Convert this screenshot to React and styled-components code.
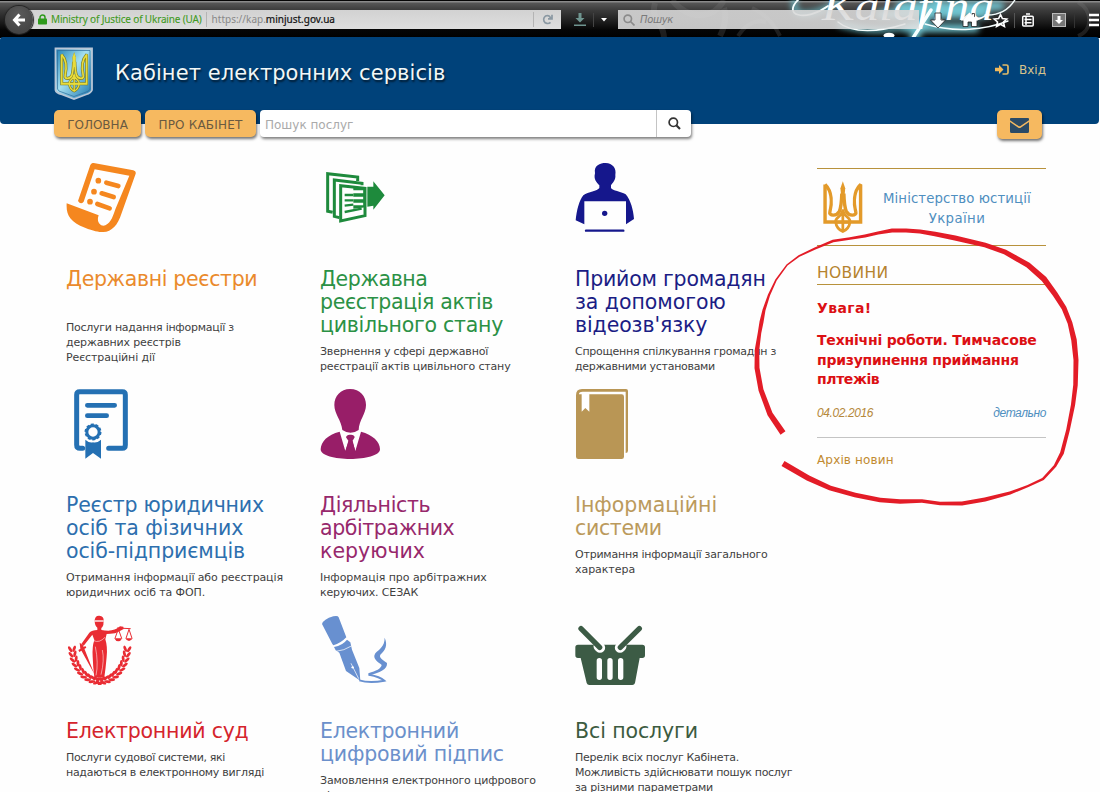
import React from 'react';
import styled, { createGlobalStyle } from 'styled-components';

const SANS = '"DejaVu Sans", Verdana, sans-serif';

const GlobalStyle = createGlobalStyle`
  * { box-sizing: border-box; }
  body { margin: 0; background: #fefefe; font-family: ${SANS}; color: #444; overflow: hidden; }
  svg { display: block; flex: none; }
`;

const Page = styled.div`
  position: relative;
  width: 1100px;
  height: 792px;
  overflow: hidden;
`;

/* ---------- browser toolbar ---------- */

const Toolbar = styled.div`
  position: relative;
  display: flex;
  align-items: center;
  height: 38px;
  padding: 3px 0 2px 5px;
  overflow: hidden;
  background: linear-gradient(#050505 0 1px, #8a8a8a 1px 2px, #565656 3px, #3c3c3c 10px, #1c1c1c 22px, #050505 30px, #000 38px);
`;

const ThemeArt = styled.svg`
  position: absolute;
  left: 640px;
  top: 0;
`;

const BackButton = styled.div`
  position: relative;
  z-index: 1;
  display: flex;
  align-items: center;
  justify-content: center;
  width: 28px;
  height: 28px;
  border-radius: 50%;
  background: radial-gradient(circle at 50% 30%, #5a5a5a, #3d3d3d);
  box-shadow: 0 0 1px 1px #222;
`;

const AddressBar = styled.div`
  position: relative;
  display: flex;
  align-items: center;
  width: 532px;
  height: 19px;
  margin-left: -4px;
  padding-left: 9px;
  background: linear-gradient(#d2d2d2, #dedede);
  font: 10px/19px "Noto Sans", sans-serif;
`;

const Owner = styled.span`
  margin-left: 4px;
  padding-right: 4px;
  color: #3f9a22;
  letter-spacing: -0.17px;
  white-space: nowrap;
  -webkit-text-stroke: 0.1px #3f9a22;
`;

const Rule = styled.span`
  width: 1px;
  height: ${p => p.$h}px;
  background: ${p => p.$c};
`;

const Url = styled.span`
  flex: 1;
  margin-left: 5px;
  color: #888;
  white-space: nowrap;
  b { font-weight: 400; color: #111; -webkit-text-stroke: 0.2px #111; }
`;

const Reload = styled.div`
  display: flex;
  align-items: center;
  justify-content: center;
  width: 28px;
  height: 15px;
  border-left: 1px solid #b4b4b4;
`;

const Downloads = styled.div`
  position: relative;
  display: flex;
  align-items: center;
  gap: 7px;
  width: 57px;
  padding-left: 13px;
`;

const BrowserSearch = styled.div`
  position: relative;
  display: flex;
  align-items: center;
  gap: 5px;
  width: 301px;
  height: 19px;
  padding-left: 5px;
  background: linear-gradient(rgba(215, 215, 215, 0.9), rgba(228, 228, 228, 0.86));
  color: #7a7a7a;
  font: italic 10px/19px "DejaVu Sans", sans-serif;
  letter-spacing: -0.35px;
`;

const Tools = styled.svg`
  position: relative;
`;

const script = '"Liberation Serif", serif';

function KalafinaArt() {
  return (
    <ThemeArt width="460" height="38" viewBox="640 0 460 38">
      <defs>
        <filter id="glow" x="-20%" y="-60%" width="140%" height="220%">
          <feGaussianBlur stdDeviation="3.2" />
        </filter>
      </defs>
      <g fill="none" stroke="#8d8d8d" strokeOpacity=".2" strokeWidth="6">
        <path d="M655 3C650 20 664 22 664 38M672 0C690 22 715 18 724 0M720 36Q728 20 724 8" />
        <path d="M738 36Q750 18 766 22M752 8Q770 16 780 36M1078 2C1092 10 1094 30 1078 36" strokeWidth="4" />
      </g>
      <g filter="url(#glow)" stroke="#6fc4d0" fill="none" strokeLinecap="round">
        <path strokeWidth="8" d="M900 6H1000M880 14H985M905 28H975" />
        <path strokeWidth="9" d="M936 2L914 38" />
        <path strokeWidth="5" d="M795 0C788 22 822 14 838 2M840 24Q880 36 915 24" />
      </g>
      <g fill="none" stroke="#f6ffff" strokeLinecap="round">
        <path strokeWidth="1.8" d="M800 -2C780 16 806 22 828 6" />
        <path strokeWidth="1.4" d="M838 22C852 34 880 32 905 24M925 24C955 33 985 30 1008 21M985 15Q1006 16 1016 -2" />
        <path strokeWidth="3.4" d="M931 10L913 38" />
      </g>
      <text x="822" y="20" fill="#fff" fontFamily={script} fontStyle="italic" fontSize="41" textLength="172" lengthAdjust="spacingAndGlyphs">Kalafina</text>
      <ellipse cx="889" cy="35.500" rx="5.500" ry="2.800" fill="#fff" />
    </ThemeArt>
  );
}

function ToolIcons() {
  return (
    <Tools width="180" height="30" viewBox="919 4 180 30">
      <g fill="#fff" stroke="#222" strokeWidth=".8">
        <path d="M935 12h6v7h4.5L938 27l-7.500-8H935z" />
        <path d="M962 19l7.500-6.500 2.500 2v-2h2.500v4l2.500 2.500v6.500h-5.500v-4.500h-3.500v4.500H963V19.500z" />
      </g>
      <path d="M961.500 19.500l8-7 8 7" fill="none" stroke="#fff" strokeWidth="1.500" />
      <path d="M1000.500 13.500l1.900 4 4.400.5-3.300 3 .9 4.400-3.900-2.200-3.900 2.200.9-4.400-3.300-3 4.400-.5z" fill="none" stroke="#fff" strokeWidth="1.600" />
      <path d="M1014.500 12v15" stroke="#555" />
      <g fill="none" stroke="#fff" strokeWidth="1.500">
        <rect x="1022.700" y="15.200" width="10.500" height="9.800" rx="1" />
        <path d="M1026 13h4M1024.500 18.500h7M1024.500 21.800h7M1026 15v9" />
      </g>
      <rect x="1052.500" y="12.500" width="13" height="13" fill="#777" stroke="#bbb" />
      <path d="M1057.500 15h3v4h2.500l-4 4-4-4h2.500z" fill="#fff" />
      <path d="M1074.500 12v15" stroke="#333" />
      <path d="M1089 14h12M1089 19h12M1089 24h12" stroke="#fff" strokeWidth="2.400" />
    </Tools>
  );
}

/* ---------- site header ---------- */

const Header = styled.header`
  position: relative;
  width: 1099px;
  height: 87px;
  margin-top: -1px;
  padding: 1px 54px 0;
  background: #00427a;
  border-radius: 3px 3px 4px 4px;
`;

const Brand = styled.div`
  display: flex;
  align-items: flex-start;
  height: 72px;
  padding-top: 9px;
`;

const SiteTitle = styled.h1`
  flex: 1;
  margin: 12px 0 0 21px;
  color: #f2f7f7;
  font-size: 21px;
  line-height: 28px;
  font-weight: 400;
  letter-spacing: 0.07px;
  text-shadow: 1px 2px 2px rgba(0, 0, 0, 0.6);
`;

const Login = styled.a`
  display: flex;
  align-items: center;
  gap: 10px;
  margin: 15px -1px 0 0;
  color: #d8c48c;
  font-size: 12px;
  line-height: 16px;
`;

const Nav = styled.nav`
  display: flex;
  align-items: flex-start;
`;

const NavButton = styled.a`
  width: ${p => p.$w}px;
  height: 27px;
  margin-right: 4px;
  border-radius: 5px;
  background: #f6b960;
  box-shadow: 1px 2px 3px rgba(0, 0, 0, 0.55);
  color: #6a5a40;
  font-size: 12px;
  line-height: 30px;
  letter-spacing: ${p => p.$ls}px;
  text-align: center;
  white-space: nowrap;
`;

const ServiceSearch = styled.div`
  display: flex;
  width: 431px;
  height: 27px;
  border-radius: 4px;
  background: #fff;
  box-shadow: 1px 2px 3px rgba(0, 0, 0, 0.5);
`;

const SearchField = styled.span`
  flex: 1;
  padding-left: 5px;
  border-right: 1px solid #c4c4c4;
  color: #aaa;
  font-size: 12px;
  line-height: 30px;
`;

const SearchButton = styled.span`
  display: flex;
  align-items: center;
  justify-content: center;
  width: 34px;
`;

const MailButton = styled.a`
  display: flex;
  align-items: center;
  justify-content: center;
  width: 45px;
  height: 29px;
  padding-top: 2px;
  margin: 0 3px 0 auto;
  border-radius: 5px;
  background: #f6b960;
  box-shadow: 1px 2px 3px rgba(0, 0, 0, 0.55);
`;

function TridentLines({ color, w = 9 }) {
  return (
    <g fill="none" stroke={color} strokeWidth={w} strokeLinejoin="miter" strokeMiterlimit="2">
      <path d="M227 103V213H331V103C309 124 311 160 317 184C320 194 298 198 289 182Q283 166 282 130" />
      <path d="M227 103C249 124 247 160 241 184C238 194 260 198 269 182Q275 166 276 130" />
      <path d="M279 94L286 114L283 150H275L272 114Z" fill={color} stroke="none" />
      <path d="M279 176C276 202 256 196 258 213C260 228 268 236 279 241C290 236 298 228 300 213C302 196 282 202 279 176V242M258 213H300" strokeWidth={w * 0.8} />
    </g>
  );
}

function Shield() {
  return (
    <svg width="40" height="53" viewBox="0 0 40 53">
      <defs>
        <linearGradient id="sh" x1="0" y1="0" x2="1" y2="1">
          <stop offset="0" stopColor="#1c7fb4" />
          <stop offset=".45" stopColor="#a4dff0" />
          <stop offset="1" stopColor="#1673ac" />
        </linearGradient>
      </defs>
      <path d="M1.500 1.500H38V43Q37 46 32 47.500L20 52L8 47.500Q2 46 1.500 43Z" fill="url(#sh)" stroke="#b9c6d6" strokeWidth="1.800" />
      <path d="M3.500 3.500H36V42Q35 44.500 31 45.500L20 49.500L9 45.500Q4 44.500 3.500 42Z" fill="none" stroke="#2f6c9c" strokeWidth=".7" />
      <g transform="translate(6.500 5.500) scale(.24 .265) translate(-222 -95)">
        <TridentLines color="#7a7a20" w={12} />
        <TridentLines color="#e8dc3c" w={7} />
      </g>
    </svg>
  );
}

/* ---------- content ---------- */

const Content = styled.main`
  display: flex;
  padding-left: 66px;
`;

const Services = styled.div`
  display: grid;
  grid-template-columns: 254px 255px 242px;
  grid-auto-rows: 226px;
  padding-top: 39px;
  height: 668px;
  overflow: hidden;
`;

const Service = styled.article`
  display: flex;
  flex-direction: column;
  white-space: nowrap;
`;

const Line = styled.span`
  display: block;
  letter-spacing: ${p => p.$ls}px;
`;

const ServiceTitle = styled.h2`
  margin: 34.600px 0 0;
  min-height: ${p => p.$min || 0}px;
  color: ${p => p.$c};
  font-size: 20.500px;
  line-height: 23.200px;
  font-weight: 400;
`;

const ServiceText = styled.p`
  margin: 6.900px 0 0;
  color: #3f3f3f;
  font-size: 11px;
  line-height: 15px;
`;

const ScrollIcon = () => (
  <svg width="70" height="70" viewBox="48 39 210 210" fill="#f5871f">
    <path d="M50 160L146 196C138 215 152 232 166 226C184 218 190 195 196 178L238 77L134 58L101 155Q92 165 84 153L121 45Q124 38 131 39L250 61Q259 63 257 71L214 192C204 224 185 246 160 246C145 246 130 243 105 233C60 215 48 195 50 160Z" />
    <circle cx="145" cy="92" r="8.500" /><circle cx="132" cy="125" r="8.500" /><circle cx="120" cy="155" r="8.500" />
    <path d="M169 98L205 108M155 130L191 141M142 162L179 175" stroke="#f5871f" strokeWidth="14" strokeLinecap="round" />
  </svg>
);

const PagesIcon = () => (
  <svg width="70" height="70" viewBox="30 39 210 210" fill="none" stroke="#1e8a3c" strokeWidth="9">
    <path d="M68 187L53 184V71L143 81V93" />
    <path d="M88 203L73 199V90L156 100V106" />
    <path d="M92 213V107L165 115V197Z" />
    <path d="M104 135H130M104 151H130M104 167L130 164M104 186L155 176" strokeWidth="7" />
    <path d="M130 113H168V172L130 176V166H160V158H130V148H160V140H130V130H160V121H130Z" fill="#1e8a3c" stroke="none" />
    <path d="M134 126H157M134 144H157M134 162H157" stroke="#fff" strokeWidth="4.500" />
    <path d="M172 110H190V94L224 136L190 179V167L172 170Z" fill="#1e8a3c" stroke="none" />
  </svg>
);

const LaptopPersonIcon = () => (
  <svg width="70" height="70" viewBox="45 39 210 210" fill="#15178c">
    <path d="M105 70C101 46 120 39 137 39C158 40 170 55 166 75C168 90 158 98 153 106V114C158 122 182 124 197 133C212 150 220 180 222 207L198 223V154H73V223L47 211C50 180 58 150 70 136C85 124 112 124 118 114V106C110 98 100 88 105 70Z" />
    <circle cx="134" cy="190" r="8" />
    <path d="M78 242H190" stroke="#15178c" strokeWidth="7" strokeLinecap="round" />
  </svg>
);

const CertificateIcon = () => (
  <svg width="70" height="70" viewBox="48 27 210 210" fill="none" stroke="#2470b3" strokeLinecap="round">
    <path d="M98 205H90Q80 205 80 195V44Q80 35 89 35H217Q226 35 226 44V195Q226 205 217 205H176" strokeWidth="15" />
    <path d="M112 76H194M112 107H170" strokeWidth="14" />
    <circle cx="129" cy="156" r="18.500" strokeWidth="9" />
    <circle cx="129" cy="156" r="22" strokeWidth="7" strokeDasharray="8.500 5.320" strokeLinecap="butt" />
    <path d="M106 179Q118 190 129 187Q141 190 153 179V236L129 219L106 236Z" fill="#2470b3" stroke="none" />
  </svg>
);

const ManagerIcon = () => (
  <svg width="70" height="70" viewBox="30 27 210 210" fill="#981e68">
    <path d="M120 27C150 27 168 48 168 75C168 102 147 120 146 150Q122 167 97 150C94 120 73 102 73 75C73 48 92 27 120 27Z" />
    <path d="M89 155L106 213L116 184L108 172Q110 163 121 164Q133 163 134 172L127 184L136 213L153 155C188 164 210 185 210 208C210 227 165 237 121 237C75 237 32 227 32 208C33 185 52 164 89 155Z" />
    <path d="M115 183H128L136 214L121 222L106 214Z" />
  </svg>
);

const BookIcon = () => (
  <svg width="70" height="70" viewBox="45 27 210 210" fill="#b99655">
    <path d="M48 46Q48 27 66 27H198Q204 27 204 33V212Q204 219 197 219V35H68Q56 35 57 43H185Q192 43 192 50V230Q192 237 185 237H55Q48 237 48 230Z" />
    <path d="M65 37H88V95L76 84L65 95Z" fill="#fff" />
  </svg>
);

function JusticeIcon() {
  const leaves = [];
  for (let i = 0; i < 11; i += 1) {
    const a = (8 + i * 8.6) * (Math.PI / 180);
    const x = 83 * Math.cos(a);
    const y = 135 + 108 * Math.sin(a);
    const deg = (Math.atan2(-108 * Math.cos(a), 83 * Math.sin(a)) * 180) / Math.PI;
    leaves.push([x, y, deg]);
  }
  const side = leaves.map(([x, y, d]) => (
    <g key={y} transform={`translate(${x} ${y}) rotate(${d})`}>
      <ellipse cx="3" cy="-6" rx="10" ry="4.200" transform="rotate(-26 3 -6)" />
      <ellipse cx="3" cy="6" rx="10" ry="4.200" transform="rotate(26 3 6)" />
    </g>
  ));
  return (
    <svg width="70" height="70" viewBox="48 45 210 210" fill="#e92c33">
      <g transform="translate(149 0)">{side}</g>
      <g transform="translate(149 0) scale(-1 1)">{side}</g>
      <path d="M134 60Q136 46 148 47Q162 48 161 62L160 75Q157 83 154 84V90Q164 92 175 92Q195 92 210 79L220 80L221 87Q205 96 195 100Q180 102 170 102L166 118Q173 140 170 170Q167 205 163 232H133Q129 200 128 170Q126 140 133 120L127 104L101 137L94 132L118 98Q126 90 142 90V83Q134 78 134 60Z" />
      <path d="M134 63H161" stroke="#fff" strokeWidth="4" />
      <path d="M131 122Q148 130 165 112M136 140Q146 190 138 226M157 150Q164 180 153 224" fill="none" stroke="#fff" strokeWidth="1.600" />
      <path d="M89 128L99 136L133 222L91 146ZM85 150L106 138L109 143L88 156Z" />
      <path d="M201 84L242 86M205 87L195 115M205 87L215 115M237 88L228 115M237 88L246 115" stroke="#e92c33" strokeWidth="3" fill="none" />
      <path d="M193 115H217Q212 124 205 124Q197 124 193 115ZM226 115H248Q243 123 237 123Q230 123 226 115Z" />
    </svg>
  );
}

const PenIcon = () => (
  <svg width="70" height="70" viewBox="810 45 210 210" fill="#6890d0">
    <path d="M816 72Q820 58 850 49Q864 46 866 52L889 112Q872 130 850 136L847 132Z" />
    <path d="M852 141Q878 136 891 119L901 127L906 149L928 204L931 242L888 213L868 158L857 151Z" />
    <path d="M858 154Q882 152 904 138M903 190L926 236" fill="none" stroke="#fff" strokeWidth="2.200" />
    <circle cx="908" cy="202" r="3.500" fill="#fff" />
    <path d="M928 241Q958 250 1003 242Q990 230 957 224" fill="none" stroke="#6890d0" strokeWidth="6" />
    <path d="M955 220C980 212 992 207 995 195C985 187 965 176 976 160C988 147 1004 140 1004 113C1014 136 1006 151 991 164C986 174 1000 180 1011 189C1013 209 990 217 955 227Z" />
  </svg>
);

const BasketIcon = () => (
  <svg width="70" height="70" viewBox="525 45 210 210">
    <path d="M534 134H727Q735 134 735 142V166Q735 174 727 174H719L705 249Q703 255 697 255H568Q562 255 560 249L542 174H534Q526 174 526 166V142Q526 134 534 134Z" fill="#3c5b45" />
    <path d="M598 182V232M630 182V232M662 182V232" stroke="#fff" strokeWidth="16" strokeLinecap="round" />
    <path d="M596 139L600 143M664 139L660 143" stroke="#fff" strokeWidth="31" strokeLinecap="round" />
    <path d="M543 86L599 142M718 86L661 142" stroke="#3c5b45" strokeWidth="16" strokeLinecap="round" />
  </svg>
);

const services = [
  { icon: ScrollIcon, color: '#ea8a2c', min: 46, title: [['Державні реєстри', -0.34]], text: [['Послуги надання інформації з', -0.26], ['державних реєстрів', -0.16], ['Реєстраційні дії', -0.12]] },
  { icon: PagesIcon, color: '#2b9145', title: [['Державна', -0.4], ['реєстрація актів', -0.36], ['цивільного стану', -0.27]], text: [['Звернення у сфері державної', -0.18], ['реєстрації актів цивільного стану', -0.18]] },
  { icon: LaptopPersonIcon, color: '#1b1d85', title: [['Прийом громадян', -0.22], ['за допомогою', -0.05], ["відеозв'язку", -0.1]], text: [['Спрощення спілкування громадян з', -0.27], ['державними установами', -0.29]] },
  { icon: CertificateIcon, color: '#2d6fae', title: [['Реєстр юридичних', -0.2], ['осіб та фізичних', -0.05], ['осіб-підприємців', -0.12]], text: [['Отримання інформації або реєстрація', -0.12], ['юридичних осіб та ФОП.', -0.12]] },
  { icon: ManagerIcon, color: '#97286c', title: [['Діяльність', -0.33], ['арбітражних', -0.4], ['керуючих', 0]], text: [['Інформація про арбітражних', -0.05], ['керуючих. СЕЗАК', -0.15]] },
  { icon: BookIcon, color: '#bb9a5c', title: [['Інформаційні', -0.05], ['системи', -0.35]], text: [['Отримання інформації загального', -0.22], ['характера', -0.05]] },
  { icon: JusticeIcon, color: '#d5242c', title: [['Електронний суд', -0.24]], text: [['Послуги судової системи, які', -0.35], ['надаються в електронному вигляді', -0.28]] },
  { icon: PenIcon, color: '#6b90cb', title: [['Електронний', -0.28], ['цифровий підпис', -0.2]], text: [['Замовлення електронного цифрового', -0.17], ['підпису', -0.14]] },
  { icon: BasketIcon, color: '#3c5b40', title: [['Всі послуги', -0.1]], text: [['Перелік всіх послуг Кабінета.', -0.29], ['Можливість здійснювати пошук послуг', -0.33], ['за різними параметрами', -0.26]] },
];

/* ---------- sidebar ---------- */

const Aside = styled.aside`
  width: 229px;
  padding-top: 44px;
`;

const Ministry = styled.div`
  display: flex;
  align-items: flex-start;
  gap: 20px;
  height: 78px;
  padding: 12px 0 0 6px;
  border: solid #b8923c;
  border-width: 1px 0;
`;

const MinistryName = styled.div`
  padding-top: 8px;
  color: #4f8fc0;
  font-size: 13.300px;
  line-height: 20px;
  text-align: center;
  white-space: nowrap;
`;

const NewsHeading = styled.h3`
  margin: 16px 0 0;
  height: 23px;
  border-bottom: 1px solid #b8923c;
  color: #b5832f;
  font-size: 15.500px;
  line-height: 22px;
  font-weight: 400;
  letter-spacing: 0.35px;
`;

const News = styled.div`
  color: #dc1014;
  font-size: 14px;
  line-height: 19.500px;
  font-weight: 700;
  white-space: nowrap;
`;

const Alert = styled.p`
  margin: ${p => p.$mt}px 0 0;
`;

const NewsMeta = styled.div`
  display: flex;
  justify-content: space-between;
  height: 33px;
  margin-top: 15px;
  border-bottom: 1px solid #c4c4c4;
  color: #b5883a;
  font: italic 12px/17px "Liberation Sans", Arial, sans-serif;
  letter-spacing: -0.4px;
  a { color: #4f8fc0; }
`;

const Archive = styled.a`
  display: block;
  margin-top: 14px;
  color: #c18a30;
  font-size: 12px;
  line-height: 16px;
  letter-spacing: 0.15px;
`;

const MarkerLayer = styled.svg`
  position: absolute;
  left: 0;
  top: 0;
  pointer-events: none;
`;

/* x, y, stroke width */
const loop = [
  [783, 433, 6], [770, 414, 5.5], [761, 390, 5], [757, 368, 5], [757, 350, 4.5], [759.5, 333, 3.5], [761.5, 322, 4], [764, 310, 3],
  [769, 295, 2.2], [776, 280, 1.6], [787, 265, 1.5], [799, 256, 1.8], [815, 248.5, 2.2], [833, 241, 2.8], [850, 238.5, 2.6], [865, 236, 3],
  [878, 233, 3], [892, 230.5, 4], [906, 230.5, 4.2], [920, 231.5, 4.2], [935, 234, 4.5], [955, 238, 5], [985, 245, 4.5], [1005, 252, 5],
  [1028, 265, 5.5], [1044, 279, 6], [1055, 294, 5.5], [1064, 308, 5], [1070, 323, 4.8], [1074, 340, 5.5], [1076, 360, 5], [1075.5, 385, 4.5],
  [1073, 405, 4.2], [1068, 430, 3.6], [1062, 453, 3.8], [1055, 466, 2.8], [1043, 479, 2.6], [1028, 486, 2.4], [1010, 493, 3], [985, 499.500, 4],
  [962, 503.500, 4], [940, 503.500, 3.5], [922, 501, 3.5], [900, 501.500, 4.5], [880, 500, 4.6], [855, 495, 4.6], [830, 488, 5], [808, 478, 5.5], [783, 463.500, 6],
];

function outline(points) {
  const left = [];
  const right = [];
  points.forEach(([x, y, w], i) => {
    const a = points[Math.max(i - 1, 0)];
    const b = points[Math.min(i + 1, points.length - 1)];
    const len = Math.hypot(b[0] - a[0], b[1] - a[1]);
    const nx = (-(b[1] - a[1]) / len) * (w / 2);
    const ny = ((b[0] - a[0]) / len) * (w / 2);
    left.push(`${x + nx},${y + ny}`);
    right.unshift(`${x - nx},${y - ny}`);
  });
  return left.concat(right).join(' ');
}

export default function App() {
  return (
    <Page>
      <GlobalStyle />
      <Toolbar>
        <KalafinaArt />
        <BackButton>
          <svg width="14" height="14" viewBox="0 0 14 14" fill="none" stroke="#fff" strokeWidth="3">
            <path d="M7.500 1.500L2.500 7L7.500 12.500M2.500 7H13" />
          </svg>
        </BackButton>
        <AddressBar>
          <svg width="9" height="11" viewBox="0 0 9 11">
            <path d="M2 5V3.500a2.500 2.500 0 015 0V5" fill="none" stroke="#2f9a1c" strokeWidth="1.500" />
            <rect y="4.500" width="9" height="6" rx=".8" fill="#2f9a1c" />
          </svg>
          <Owner>Ministry of Justice of Ukraine (UA)</Owner>
          <Rule $h={15} $c="#b4b4b4" />
          <Url>https://kap.<b>minjust.gov.ua</b></Url>
          <Reload>
            <svg width="11" height="11" viewBox="0 0 11 11" fill="none" stroke="#8a98a2" strokeWidth="1.700">
              <path d="M8.500 8.300A4 4 0 115.500 1.500Q7.500 1.500 9 4.500M10 .8V4.800H6" />
            </svg>
          </Reload>
        </AddressBar>
        <Downloads>
          <svg width="12" height="13" viewBox="0 0 12 13" fill="#6f9590">
            <path d="M4.500 0h3v5h3L6 9.500 1.500 5h3zM0 11.500h12V13H0z" />
          </svg>
          <Rule $h={14} $c="#444" />
          <svg width="6" height="4" viewBox="0 0 6 4" fill="#fff"><path d="M0 0h6L3 3.500z" /></svg>
        </Downloads>
        <BrowserSearch>
          <svg width="12" height="12" viewBox="0 0 12 12" fill="none" stroke="#8b8b8b" strokeWidth="1.700">
            <circle cx="4.800" cy="4.800" r="3.700" /><path d="M7.500 7.500L11.500 11.500" />
          </svg>
          Пошук
        </BrowserSearch>
        <ToolIcons />
      </Toolbar>

      <Header>
        <Brand>
          <Shield />
          <SiteTitle>Кабінет електронних сервісів</SiteTitle>
          <Login>
            <svg width="14" height="12" viewBox="0 0 14 12" fill="#f0b95c">
              <path d="M0 3.800h4V1L8.500 5.500 4 10V7.200H0z" />
              <path d="M7.500 1H11.500Q13 1 13 2.500V8.500Q13 10 11.500 10H7.500" fill="none" stroke="#e0ba68" strokeWidth="1.700" />
            </svg>
            Вхід
          </Login>
        </Brand>
        <Nav>
          <NavButton $w={87} $ls={0}>ГОЛОВНА</NavButton>
          <NavButton $w={111} $ls={0.2}>ПРО КАБІНЕТ</NavButton>
          <ServiceSearch>
            <SearchField>Пошук послуг</SearchField>
            <SearchButton>
              <svg width="13" height="13" viewBox="0 0 13 13" fill="none" stroke="#333" strokeWidth="1.700">
                <circle cx="5.300" cy="5.300" r="4.200" /><path d="M8.300 8.300L12 12" strokeWidth="2.200" />
              </svg>
            </SearchButton>
          </ServiceSearch>
          <MailButton>
            <svg width="19" height="15" viewBox="0 0 19 15" fill="#2b4a66">
              <path d="M1 0H18Q19 0 19 1V2.200L10.500 8Q9.500 8.700 8.500 8L0 2.200V1Q0 0 1 0Z" />
              <path d="M0 4L8 9.500Q9.500 10.500 11 9.500L19 4V13.500Q19 15 17.500 15H1.500Q0 15 0 13.500Z" />
            </svg>
          </MailButton>
        </Nav>
      </Header>

      <Content>
        <Services>
          {services.map(({ icon: Icon, color, min, title, text }) => (
            <Service key={color}>
              <Icon />
              <ServiceTitle $c={color} $min={min}>
                {title.map(([t, ls]) => <Line key={t} $ls={ls}>{t}</Line>)}
              </ServiceTitle>
              <ServiceText>
                {text.map(([t, ls]) => <Line key={t} $ls={ls}>{t}</Line>)}
              </ServiceText>
            </Service>
          ))}
        </Services>
        <Aside>
          <Ministry>
            <svg width="40" height="53" viewBox="221 93 117 155"><TridentLines color="#e39a2a" w={10} /></svg>
            <MinistryName>
              <Line $ls={0.1}>Міністерство юстиції</Line>
              <Line $ls={0.4}>України</Line>
            </MinistryName>
          </Ministry>
          <NewsHeading>НОВИНИ</NewsHeading>
          <News>
            <Alert $mt={14}><Line $ls={0.4}>Увага!</Line></Alert>
            <Alert $mt={12.5}>
              <Line $ls={-0.2}>Технічні роботи. Тимчасове</Line>
              <Line $ls={-0.25}>призупинення приймання</Line>
              <Line $ls={-0.4}>плтежів</Line>
            </Alert>
          </News>
          <NewsMeta><span>04.02.2016</span><a>детально</a></NewsMeta>
          <Archive>Архів новин</Archive>
        </Aside>
      </Content>

      <MarkerLayer width="1100" height="792" viewBox="0 0 1100 792">
        <polygon points={outline(loop)} fill="#e31c27" />
      </MarkerLayer>
    </Page>
  );
}
